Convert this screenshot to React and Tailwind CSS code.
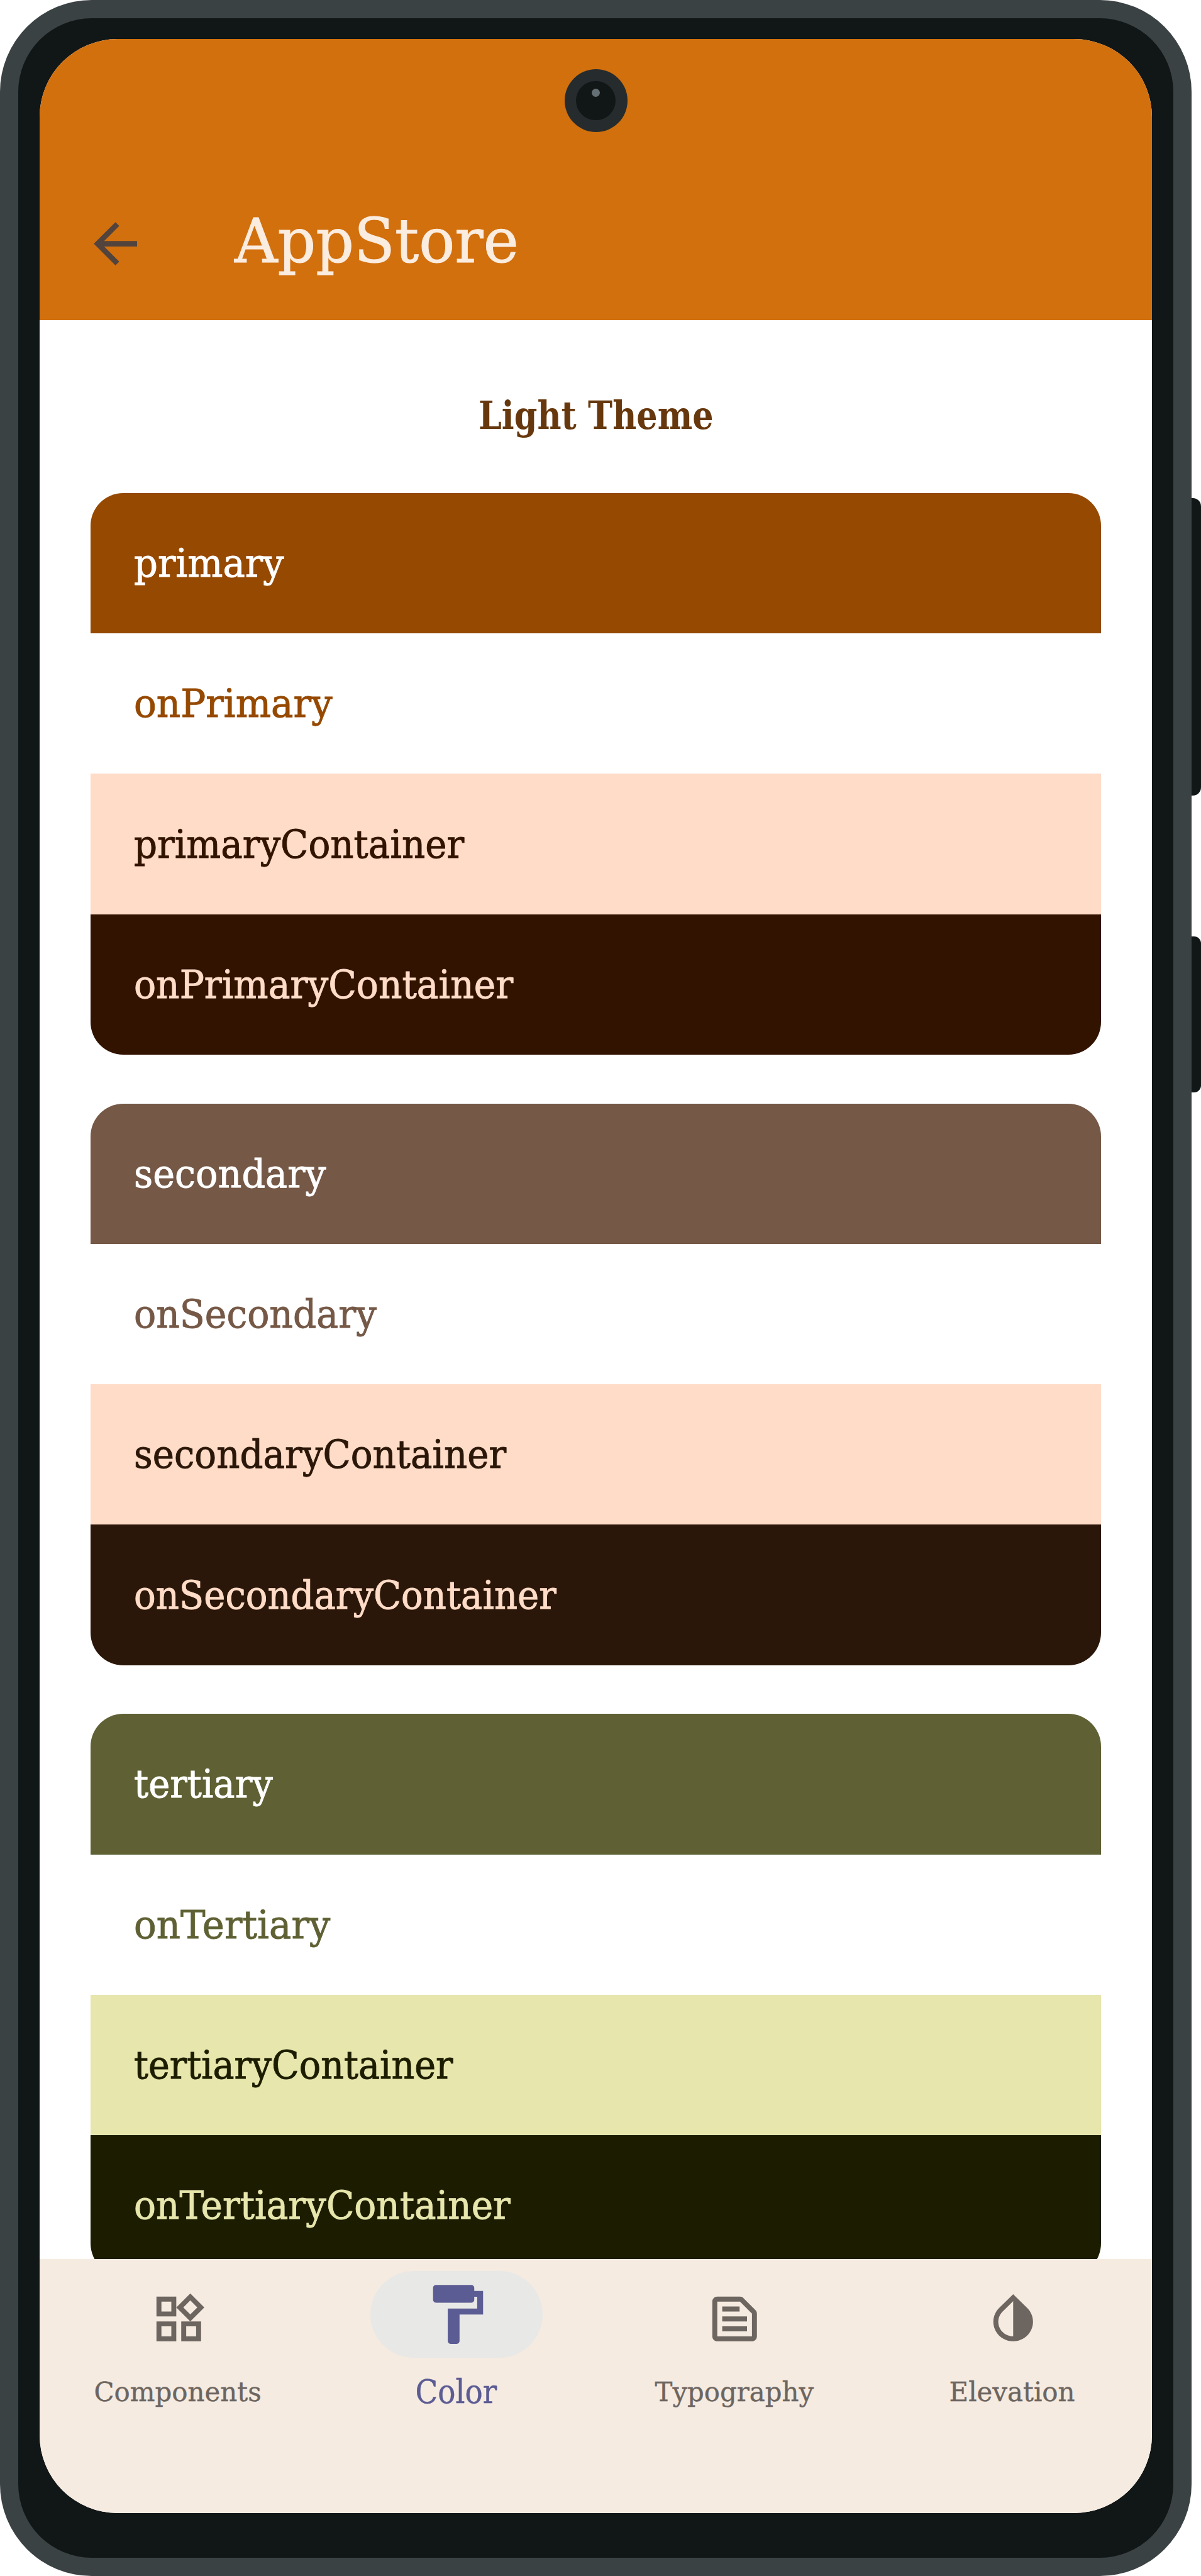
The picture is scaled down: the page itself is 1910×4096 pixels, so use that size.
import { useLayoutEffect, useRef, useState } from "react";

// Single line label whose glyphs are condensed or widened to a given width.
function Fit({ w, children, align = "left" }) {
  const ref = useRef(null);
  const [s, setS] = useState(1);
  useLayoutEffect(() => {
    setS(w / ref.current.offsetWidth);
  }, [w]);
  return (
    <span className={"flex whitespace-nowrap " + (align === "center" ? "justify-center" : "justify-start")}>
      <span
        ref={ref}
        className={"block " + (align === "center" ? "origin-center" : "origin-left")}
        style={{ transform: `scaleX(${s})` }}
      >
        {children}
      </span>
    </span>
  );
}

const groups = [
  [
    { name: "primary", w: 239, c: "bg-[#964900] text-white" },
    { name: "onPrimary", w: 316, c: "bg-white text-[#964900]" },
    { name: "primaryContainer", w: 525, c: "bg-[#ffdcc7] text-[#311300]" },
    { name: "onPrimaryContainer", w: 603, c: "bg-[#311300] text-[#ffdcc7]" },
  ],
  [
    { name: "secondary", w: 306, c: "bg-[#755846] text-white" },
    { name: "onSecondary", w: 386, c: "bg-white text-[#755846]" },
    { name: "secondaryContainer", w: 592, c: "bg-[#ffdcc7] text-[#2b1709]" },
    { name: "onSecondaryContainer", w: 672, c: "bg-[#2b1709] text-[#ffdcc7]" },
  ],
  [
    { name: "tertiary", w: 221, c: "bg-[#5f6134] text-white" },
    { name: "onTertiary", w: 312, c: "bg-white text-[#5f6134]" },
    { name: "tertiaryContainer", w: 507, c: "bg-[#e7e6ad] text-[#1c1d00]" },
    { name: "onTertiaryContainer", w: 599, c: "bg-[#1c1d00] text-[#e7e6ad]" },
  ],
];

const tabs = [
  {
    name: "Components",
    w: 266,
    d: "M16.66 4.52l2.83 2.83-2.83 2.83-2.83-2.83 2.83-2.83M9 5v4H5V5h4m10 10v4h-4v-4h4M9 15v4H5v-4h4m7.66-13.31L11 7.34 16.66 13l5.66-5.66-5.66-5.65zM11 3H3v8h8V3zm10 10h-8v8h8v-8zm-10 0H3v8h8v-8z",
  },
  {
    name: "Color",
    w: 130,
    active: true,
    d: "M18 4V3c0-.55-.45-1-1-1H5c-.55 0-1 .45-1 1v4c0 .55.45 1 1 1h12c.55 0 1-.45 1-1V6h1v4H9v11c0 .55.45 1 1 1h2c.55 0 1-.45 1-1v-9h8V4h-3z",
  },
  {
    name: "Typography",
    w: 253,
    d: "M14.17 5 19 9.83V19H5V5h9.17m0-2H5c-1.1 0-2 .9-2 2v14c0 1.1.9 2 2 2h14c1.1 0 2-.9 2-2V9.83c0-.53-.21-1.04-.59-1.41l-4.83-4.83c-.37-.38-.88-.59-1.41-.59zM7 15h10v2H7v-2zm0-4h10v2H7v-2zm0-4h7v2H7V7z",
  },
  {
    name: "Elevation",
    w: 200,
    d: "M12 4.81V19c-3.31 0-6-2.63-6-5.87 0-1.56.62-3.03 1.75-4.14L12 4.81M6.35 7.56C4.9 8.99 4 10.96 4 13.13 4 17.48 7.58 21 12 21s8-3.52 8-7.87c0-2.17-.9-4.14-2.35-5.57L12 2 6.35 7.56z",
  },
];

function Camera() {
  return (
    <div className="absolute left-1/2 top-[48px] flex h-[100px] w-[100px] -translate-x-1/2 items-center justify-center rounded-full bg-[#262c2e]">
      <div className="flex h-[62.6px] w-[62.6px] justify-center rounded-full bg-[#111616] pt-[12.4px]">
        <div className="h-[12.4px] w-[12.4px] rounded-full bg-[#657074]" />
      </div>
    </div>
  );
}

function Header() {
  return (
    <header className="relative flex h-[446.4px] shrink-0 items-start bg-[#d2700e] pl-[69px] pt-[274px]">
      <Camera />
      <svg viewBox="0 0 24 24" className="h-[103.2px] w-[103.2px]" fill="#52443c">
        <path d="M20 11H7.83l5.59-5.59L12 4l-8 8 8 8 1.41-1.41L7.83 13H20v-2z" />
      </svg>
      <h1 className="-mt-[12px] ml-[138px] text-[97px] leading-[120px] text-[#fbece0] [-webkit-text-stroke:1px_currentColor]">
        <Fit w={452}>AppStore</Fit>
      </h1>
    </header>
  );
}

function Group({ rows }) {
  return (
    <section className="shrink-0 overflow-hidden rounded-[52px]">
      {rows.map((r) => (
        <div
          key={r.name}
          className={
            "flex h-[223.3px] items-center pl-[69px] pt-px text-[61px] leading-[80px] [-webkit-text-stroke:0.9px_currentColor] " +
            r.c
          }
        >
          <Fit w={r.w}>{r.name}</Fit>
        </div>
      ))}
    </section>
  );
}

function Tab({ t }) {
  return (
    <div className={"flex flex-1 flex-col items-center pt-[19.5px] " + (t.active ? "text-[#5c5c94]" : "text-[#6d655f]")}>
      <div
        className={
          "flex h-[137.5px] w-[274px] items-center justify-center rounded-full " + (t.active ? "bg-[#e8e8e6]" : "")
        }
      >
        <svg
          viewBox="0 0 24 24"
          fill="currentColor"
          className={t.active ? "h-[112.3px] w-[112.3px]" : "mt-[14px] h-[94.6px] w-[94.6px]"}
        >
          <path d={t.d} />
        </svg>
      </div>
      <div
        className={
          "mr-[2px] mt-[22.5px] leading-[64px] [-webkit-text-stroke:0.4px_currentColor] " +
          (t.active ? "text-[53px]" : "text-[43px]")
        }
      >
        <Fit w={t.w} align="center">{t.name}</Fit>
      </div>
    </div>
  );
}

export default function App() {
  return (
    <div className="flex h-[4096px] w-[1910px] overflow-hidden bg-white font-['Roboto_Slab','DejaVu_Serif',serif]">
      <div className="h-[4096px] w-[1895px] shrink-0 rounded-[146px] bg-[#3b4244] px-[28.6px] py-[28.6px]">
        <div className="h-full rounded-[117px] bg-[#111616] px-[34.3px] pt-[33.6px]">
          <div className="relative flex h-[3933.5px] flex-col overflow-hidden rounded-[124px] bg-white">
            <Header />
            <main className="flex min-h-0 flex-1 flex-col gap-[77.6px] overflow-hidden px-[81.4px]">
              <h2 className="-mb-[77.6px] h-[275.2px] shrink-0 pt-[112px] text-center text-[62px] font-bold leading-[80px] text-[#67380d]">
                <Fit w={374} align="center">Light Theme</Fit>
              </h2>
              {groups.map((g) => (
                <Group key={g[0].name} rows={g} />
              ))}
            </main>
            <nav className="flex h-[403.8px] shrink-0 bg-[#f5ebe1]">
              {tabs.map((t) => (
                <Tab key={t.name} t={t} />
              ))}
            </nav>
          </div>
        </div>
      </div>
      <div className="w-[15px] shrink-0 pt-[792px]">
        <div className="h-[472.5px] rounded-r-[13px] bg-[#111616]" />
        <div className="mt-[224.5px] h-[248px] rounded-r-[11px] bg-[#111616]" />
      </div>
    </div>
  );
}
